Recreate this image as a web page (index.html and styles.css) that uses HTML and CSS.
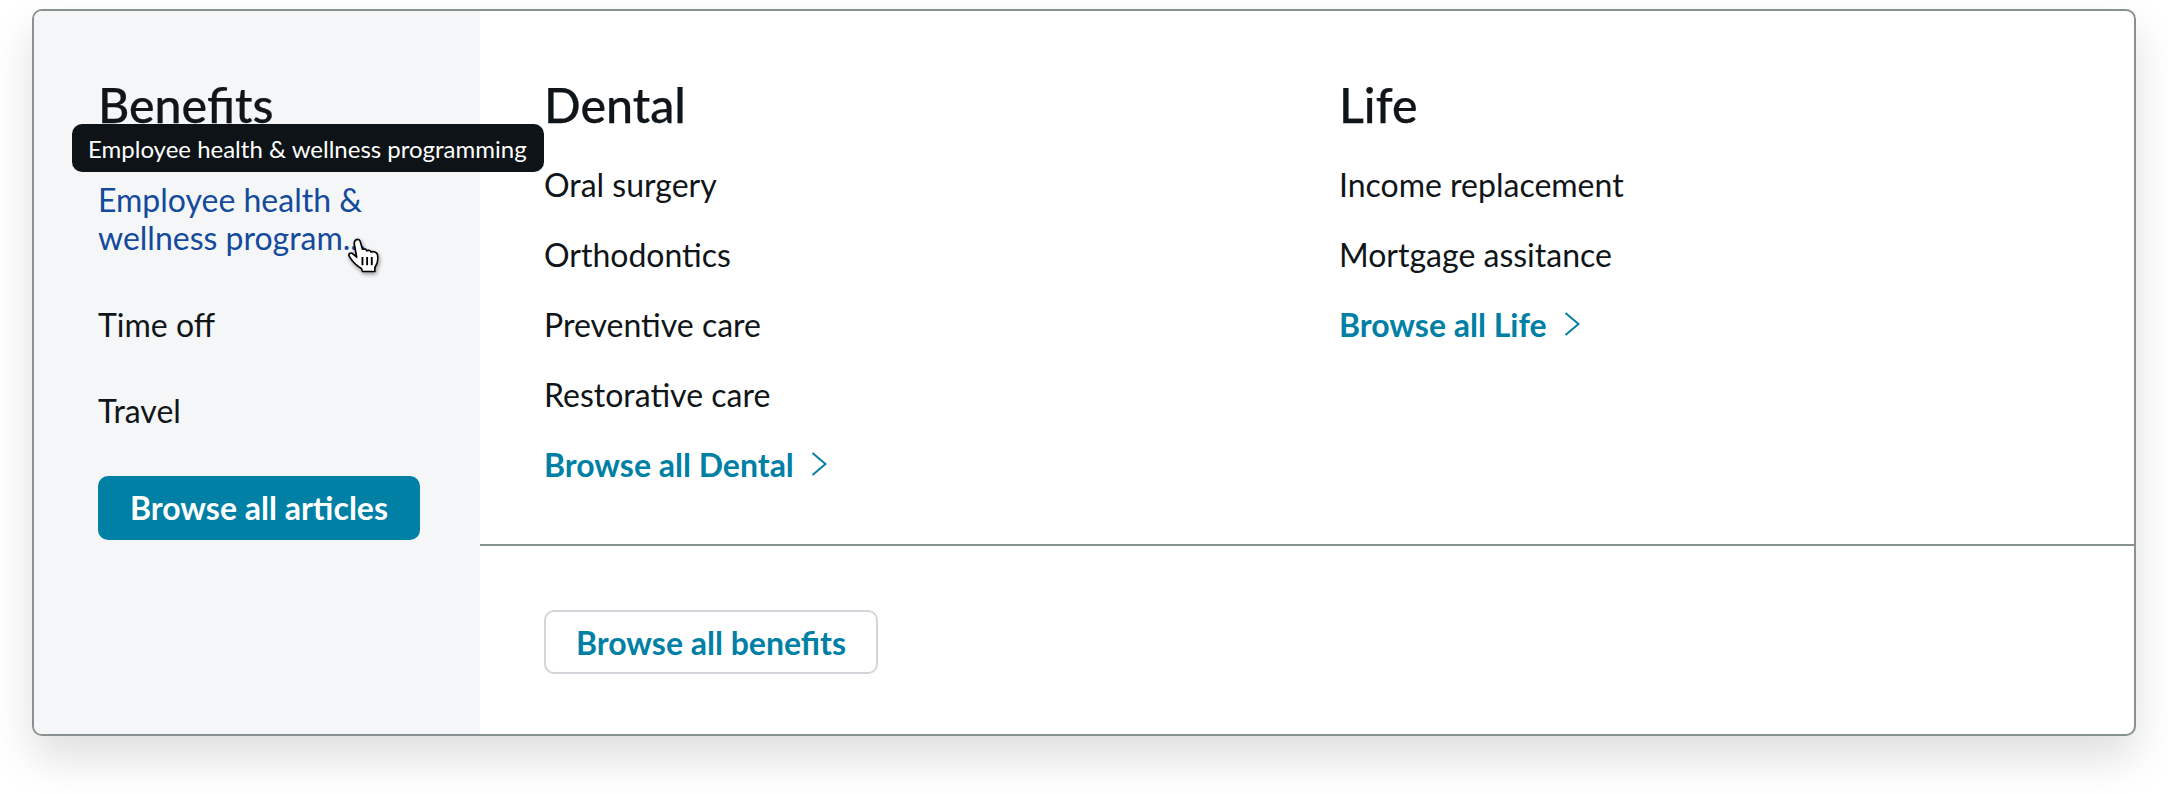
FILE: index.html
```html
<!DOCTYPE html>
<html lang="en">
<head>
    <meta charset="UTF-8">
    <meta name="viewport" content="width=device-width, initial-scale=1.0">
    <title>Benefits menu</title>
    <link rel="stylesheet" href="styles.css">
</head>
<body>
    <div class="menu-card">
        <aside class="sidebar">
            <h2 class="menu-title">Benefits</h2>
            <div class="tooltip">Employee health &amp; wellness programming</div>
            <ul class="side-list">
                <li class="side-item hovered">Employee health &amp; wellness program...</li>
                <li class="side-item">Time off</li>
                <li class="side-item">Travel</li>
            </ul>
            <button class="btn-primary">Browse all articles</button>
            <svg class="hand-cursor" viewBox="0 0 30 33" width="31" height="35">
                <path d="M6.4 2.8C7.6 .2 11 .2 11.8 2.8L14 10.4C15.8 9.6 17.6 10.4 18.2 12C19.8 11 21.8 11.6 22.4 13.2C24.6 12.2 27.6 13.2 28.4 15.2C29.4 19.4 28.4 25 26 28L26 32L14 32L13 29C9 27 4 22 1.2 17.4C0 15 2.4 13.2 4.4 14.6L8.4 18.2L6 5Z" fill="#fff" stroke="#000" stroke-width="1.6" stroke-linejoin="round"/>
                <path d="M14 18V26M18.5 18V26M23 18V26" stroke="#000" stroke-width="1.8" fill="none"/>
            </svg>
        </aside>
        <main class="content">
            <div class="columns">
                <section class="column">
                    <h2 class="menu-title">Dental</h2>
                    <ul class="link-list">
                        <li>Oral surgery</li>
                        <li>Orthodontics</li>
                        <li>Preventive care</li>
                        <li>Restorative care</li>
                        <li class="browse-link">Browse all Dental
                            <svg class="chevron" viewBox="0 0 16 24" width="16" height="24"><path d="M1.5 1L14.5 12L1.5 23" fill="none" stroke="#0080a5" stroke-width="2"/></svg>
                        </li>
                    </ul>
                </section>
                <section class="column">
                    <h2 class="menu-title">Life</h2>
                    <ul class="link-list">
                        <li>Income replacement</li>
                        <li>Mortgage assitance</li>
                        <li class="browse-link">Browse all Life
                            <svg class="chevron" viewBox="0 0 16 24" width="16" height="24"><path d="M1.5 1L14.5 12L1.5 23" fill="none" stroke="#0080a5" stroke-width="2"/></svg>
                        </li>
                    </ul>
                </section>
            </div>
            <div class="content-footer">
                <button class="btn-outline">Browse all benefits</button>
            </div>
        </main>
    </div>
</body>
</html>
```

FILE: styles.css
```css
* {
    box-sizing: border-box;
}

html,
body {
    height: 100%;
}

body {
    font-family: Lato, 'Open Sans', sans-serif;
    margin: 0;
    padding: 9px 32px 0;
    background-color: #fff;
    color: #0f1518;
}

.menu-card {
    display: flex;
    height: 727px;
    background-color: #fff;
    border: 2px solid #87928f;
    border-radius: 10px;
    box-shadow: 0 22px 44px rgba(0, 0, 0, 0.13);
}

.sidebar {
    position: relative;
    width: 446px;
    flex-shrink: 0;
    padding: 65px 0 0 64px;
    background-color: #f5f6f8;
    border-radius: 8px 0 0 8px;
}

.menu-title {
    margin: 0;
    font-size: 48.3px;
    font-weight: 500;
    line-height: 56px;
    -webkit-text-stroke: 0.25px #0f1518;
}

.tooltip {
    position: absolute;
    left: 38px;
    top: 113px;
    height: 48px;
    padding: 0 17px 0 16px;
    display: flex;
    align-items: center;
    background-color: #0d1316;
    color: #fff;
    font-size: 24px;
    border-radius: 10px;
    white-space: nowrap;
    z-index: 2;
}

.side-list,
.link-list {
    list-style: none;
    margin: 0;
    padding: 0;
}

.side-list {
    margin-top: 48.6px;
    width: 290px;
    display: flex;
    flex-direction: column;
    gap: 46.5px;
}

.side-item {
    font-size: 32px;
    line-height: 39px;
}

.hovered {
    color: #134a9b;
    line-height: 38px;
    margin-bottom: 2px;
}

.btn-primary,
.btn-outline {
    font-family: inherit;
    font-size: 32px;
    font-weight: 700;
    border-radius: 10px;
}

.btn-primary {
    margin-top: 46px;
    width: 322px;
    height: 64px;
    background-color: #0080a5;
    color: #fff;
    border: none;
}

.hand-cursor {
    position: absolute;
    left: 314px;
    top: 227px;
    filter: drop-shadow(1px 2px 2px rgba(0, 0, 0, 0.4));
    z-index: 3;
}

.content {
    flex: 1;
    display: flex;
    flex-direction: column;
}

.columns {
    height: 535px;
    display: flex;
    padding: 65px 0 0 64px;
    border-bottom: 2px solid #87928f;
}

.column {
    width: 795px;
}

.link-list {
    margin-top: 32.6px;
    display: flex;
    flex-direction: column;
    gap: 31px;
    font-size: 32px;
    line-height: 39px;
}

.browse-link {
    display: flex;
    align-items: center;
    gap: 17px;
    color: #0080a5;
    font-weight: 700;
}

.content-footer {
    padding: 64px 0 0 64px;
}

.btn-outline {
    width: 334px;
    height: 64px;
    background-color: #fff;
    color: #0080a5;
    border: 2px solid #d2d6da;
}
```
